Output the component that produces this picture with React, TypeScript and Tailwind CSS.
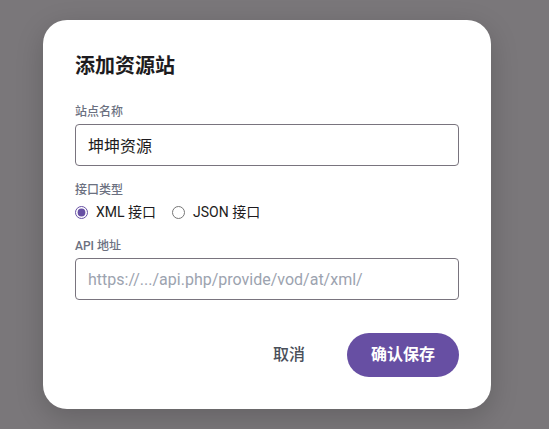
import { useState } from "react";

const fontStack = "font-['Roboto','Noto_Sans_CJK_SC',sans-serif]";

const App: React.FC = () => {
  const [name, setName] = useState("坤坤资源");
  const [kind, setKind] = useState<"xml" | "json">("xml");
  const [api, setApi] = useState("");

  return (
    <div className={`${fontStack} flex h-[429px] w-full items-center bg-[#7a777a] pl-[43px]`}>
      <div className="w-[448px] rounded-[24px] bg-white px-8 pt-8 pb-8 shadow-[0_8px_28px_rgba(0,0,0,0.18)]">
        <h2 className="text-[20px] leading-7 font-bold text-[#1d1b20]">添加资源站</h2>

        <label className="mt-6 mb-1 block text-xs leading-4 font-medium text-[#6b7080]">站点名称</label>
        <input
          value={name}
          onChange={(e) => setName(e.target.value)}
          className="block h-[42px] w-full rounded border border-[#79747e] px-3 text-base text-[#1d1b20] outline-none"
        />

        <label className="mt-4 mb-1 block text-xs leading-4 font-medium text-[#6b7080]">接口类型</label>
        <div className="flex h-5 items-center text-sm text-[#1d1b20]">
          <label className="flex items-center gap-2">
            <input
              type="radio"
              name="kind"
              checked={kind === "xml"}
              onChange={() => setKind("xml")}
              className="m-0 h-[13px] w-[13px] accent-[#6750a4]"
            />
            XML 接口
          </label>
          <label className="ml-4 flex items-center gap-2">
            <input
              type="radio"
              name="kind"
              checked={kind === "json"}
              onChange={() => setKind("json")}
              className="m-0 h-[13px] w-[13px] accent-[#6750a4]"
            />
            JSON 接口
          </label>
        </div>

        <label className="mt-4 mb-1 block text-xs leading-4 font-medium text-[#6b7080]">API 地址</label>
        <input
          value={api}
          onChange={(e) => setApi(e.target.value)}
          placeholder="https://.../api.php/provide/vod/at/xml/"
          className="block h-[42px] w-full rounded border border-[#79747e] px-3 text-base text-[#1d1b20] outline-none placeholder:text-[#9ca3af]"
        />

        <div className="mt-[33px] flex items-center justify-end gap-[18px]">
          <button className="h-11 px-6 text-base font-medium text-[#4a4f5a]">取消</button>
          <button className="h-11 rounded-full bg-[#674fa3] px-6 text-base font-bold text-white">确认保存</button>
        </div>
      </div>
    </div>
  );
};

export default App;
